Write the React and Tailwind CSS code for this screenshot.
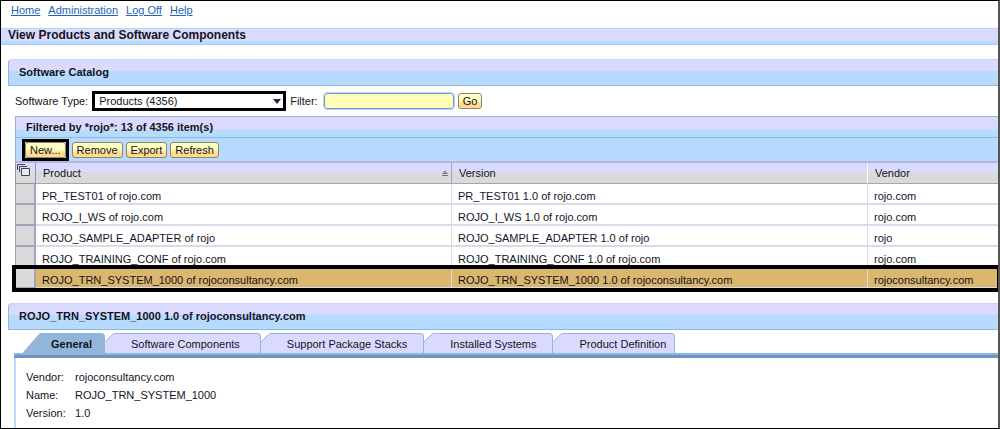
import { useState } from "react";

const products = [
  { name: "PR_TEST01", vendor: "rojo.com" },
  { name: "ROJO_I_WS", vendor: "rojo.com" },
  { name: "ROJO_SAMPLE_ADAPTER", vendor: "rojo" },
  { name: "ROJO_TRAINING_CONF", vendor: "rojo.com" },
  { name: "ROJO_TRN_SYSTEM_1000", vendor: "rojoconsultancy.com" },
];

// padding differs per tab, so the full classes are kept here
const tabs = [
  { label: "General", className: "pl-[10px] pr-3" },
  { label: "Software Components", className: "pl-2 pr-5" },
  { label: "Support Package Stacks", className: "pl-2 pr-4" },
  { label: "Installed Systems", className: "pl-2 pr-4" },
  { label: "Product Definition", className: "pl-2 pr-2" },
];

function Button({ children }) {
  return (
    <button
      type="button"
      className="h-4 rounded-[3px] border border-[#8c8664] bg-linear-to-b from-[#ffffc4] from-40% to-[#ffdb92] to-70% px-1 leading-[14px]"
    >
      {children}
    </button>
  );
}

function TitleBar({ children }) {
  return (
    <div className="h-[27px] rounded-tl-sm border-t border-b border-l border-t-[#c8d4fe] border-b-[#92b6db] border-l-[#92b6db] bg-linear-to-b from-[#dadafe] from-[11px] to-[#b6dbff] to-[11px] pl-[10px]">
      <h2 className="font-bold leading-[25px]">{children}</h2>
    </div>
  );
}

function Tab({ tab, active, onClick }) {
  return (
    <button type="button" role="tab" aria-selected={active} onClick={onClick} className="flex h-5">
      <svg width="18" height="20" viewBox="0 0 18 20">
        {active ? (
          <path d="M0 20 L16 1.5 Q17 0.5 18 0.5 V20 Z" fill="#92b6db" />
        ) : (
          <path d="M0 20 V9 L7 2 Q8.500 0.500 10 0.500 H18 V20 Z" fill="#dadafe" />
        )}
        <path
          d={active ? "M0 20 L16 1.5 Q17 0.5 18 0.5" : "M0 9 L7 2 Q8.500 0.500 10 0.500 H18"}
          fill="none"
          stroke="#92b6db"
        />
      </svg>
      <span
        className={`h-5 rounded-tr-sm border-t border-r border-[#92b6db] leading-5 ${tab.className} ${
          active ? "bg-[#92b6db] font-bold" : "bg-[#dadafe]"
        }`}
      >
        {tab.label}
      </span>
    </button>
  );
}

function App() {
  const [filter, setFilter] = useState("");
  const [selected, setSelected] = useState(4);
  const [activeTab, setActiveTab] = useState("General");

  const current = products[selected];

  return (
    <div className="flex min-h-screen flex-col overflow-hidden border border-r-2 border-black border-r-[#555] bg-white font-['Liberation_Sans',Arial,sans-serif] text-[11px] text-[#14141e]">
      <nav className="flex h-[27px] gap-2 pl-[10px] leading-[19px] text-[#2464b6]">
        <a href="#home" className="underline">Home</a>
        <a href="#administration" className="underline">Administration</a>
        <a href="#logoff" className="underline">Log Off</a>
        <a href="#help" className="underline">Help</a>
      </nav>

      <header className="h-[17px] border-t border-b border-t-[#b6dbdb] border-b-[#a4ccf4] bg-linear-to-b from-[#dadafe] from-[12px] to-[#b6dbff] to-[12px] pl-[7px]">
        <h1 className="text-xs font-bold leading-[13px]">View Products and Software Components</h1>
      </header>

      <main className="flex flex-1 flex-col pt-[14px] pl-[7px]">
        <TitleBar>Software Catalog</TitleBar>

        {/* Search row */}
        <div className="flex h-[30px] items-center gap-1 pl-[7px]">
          <label htmlFor="type">Software Type:</label>
          <div className="relative">
            <select
              id="type"
              className="block h-5 w-[194px] appearance-none border-3 border-black bg-white pl-1 leading-[14px]"
            >
              <option>Products (4356)</option>
            </select>
            <svg className="pointer-events-none absolute top-2 right-[5px]" width="8" height="5">
              <path d="M0 0 H8 L4 5 Z" fill="#1c2c48" />
            </svg>
          </div>
          <label htmlFor="filter">Filter:</label>
          <input
            id="filter"
            value={filter}
            onChange={(e) => setFilter(e.target.value)}
            className="ml-[2px] h-4 w-[130px] rounded-[3px] border border-[#6d92db] bg-[#ffffb6] px-1 outline outline-[#b6dbff]"
          />
          <Button>Go</Button>
        </div>

        {/* Product list */}
        <section className="ml-[7px]">
          <div className="h-[21px] border-t border-l border-[#92b6db] bg-linear-to-b from-[#dadafe] from-[13px] to-[#b6dbff] to-[13px] pl-[10px]">
            <h3 className="font-bold leading-[21px]">Filtered by *rojo*: 13 of 4356 item(s)</h3>
          </div>
          <div className="flex h-[26px] items-center gap-[3px] border-t border-b-2 border-l border-[#92b6db] border-b-[#b6b6db] bg-[#b6dbff] pl-[6px]">
            <div className="flex border-3 border-black">
              <Button>New...</Button>
            </div>
            <Button>Remove</Button>
            <Button>Export</Button>
            <Button>Refresh</Button>
          </div>

          <table className="w-full table-fixed border-separate border-spacing-0 text-left">
            <colgroup>
              <col className="w-[21px]" />
              <col className="w-[416px]" />
              <col className="w-[416px]" />
              <col />
            </colgroup>
            <thead>
              <tr className="h-[21px] bg-linear-to-b from-[#dadafe] from-[9px] to-[#dadada] to-[9px]">
                <th className="border-r border-b border-l border-[#9292b6] p-0 align-top">
                  <svg width="15" height="14" viewBox="0 0 15 14" fill="none" stroke="#404048">
                    <path d="M1.500 7 V1.500 H9" />
                    <path d="M3.500 9 V3.500 H11" />
                    <path d="M5.500 5.500 H13.500 V12.500 H5.500 Z" fill="#e8e8f4" />
                  </svg>
                </th>
                <th className="border-r border-b border-[#a4a4c0] p-0 pl-[7px] font-normal">
                  <div className="flex items-center justify-between pr-[3px]">
                    Product
                    <svg width="6" height="6" viewBox="0 0 6 6" fill="none" stroke="#6d6d92">
                      <path d="M3 1 L1 3.500 H5 Z M0 5.500 H6" />
                    </svg>
                  </div>
                </th>
                <th className="border-r border-b border-r-white border-b-[#a4a4c0] p-0 pl-[7px] font-normal">Version</th>
                <th className="border-b border-[#a4a4c0] p-0 pl-[7px] font-normal">Vendor</th>
              </tr>
            </thead>
            <tbody>
              {products.map((product, i) => (
                <tr
                  key={product.name}
                  onClick={() => setSelected(i)}
                  className={`h-[21px] ${
                    i === selected ? "bg-[#dbb66d] outline-4 -outline-offset-1 outline-black" : "bg-white"
                  }`}
                >
                  <td className="border-r-2 border-b-2 border-l border-[#a4a4b8] bg-[#dadada] p-0" />
                  <td className="border-r border-b-2 border-[#dadaea] p-0 pt-[6px] pl-[6px] leading-[13px]">
                    {product.name} of {product.vendor}
                  </td>
                  <td className="border-r border-b-2 border-[#dadaea] p-0 pt-[6px] pl-[6px] leading-[13px]">
                    {product.name} 1.0 of {product.vendor}
                  </td>
                  <td className="border-b-2 border-[#dadaea] p-0 pt-[6px] pl-[6px] leading-[13px]">{product.vendor}</td>
                </tr>
              ))}
            </tbody>
          </table>
        </section>

        {/* Details of the selected product */}
        <section className="flex flex-1 flex-col pt-[14px]">
          <TitleBar>
            {current.name} 1.0 of {current.vendor}
          </TitleBar>
          <div role="tablist" className="mt-[3px] ml-[15px] flex">
            {tabs.map((tab) => (
              <Tab
                key={tab.label}
                tab={tab}
                active={tab.label === activeTab}
                onClick={() => setActiveTab(tab.label)}
              />
            ))}
          </div>
          <div className="ml-[6px] h-[5px] border-t-2 border-[#92b6db] bg-[#6d92c4]" />
          <dl className="ml-[6px] grid flex-1 grid-cols-[49px_1fr] content-start border-l-2 border-[#b6dbff] pt-[10px] pl-[10px] leading-[18px]">
            <dt>Vendor:</dt>
            <dd>{current.vendor}</dd>
            <dt>Name:</dt>
            <dd>{current.name}</dd>
            <dt>Version:</dt>
            <dd>1.0</dd>
          </dl>
        </section>
      </main>
    </div>
  );
}

export default App;
